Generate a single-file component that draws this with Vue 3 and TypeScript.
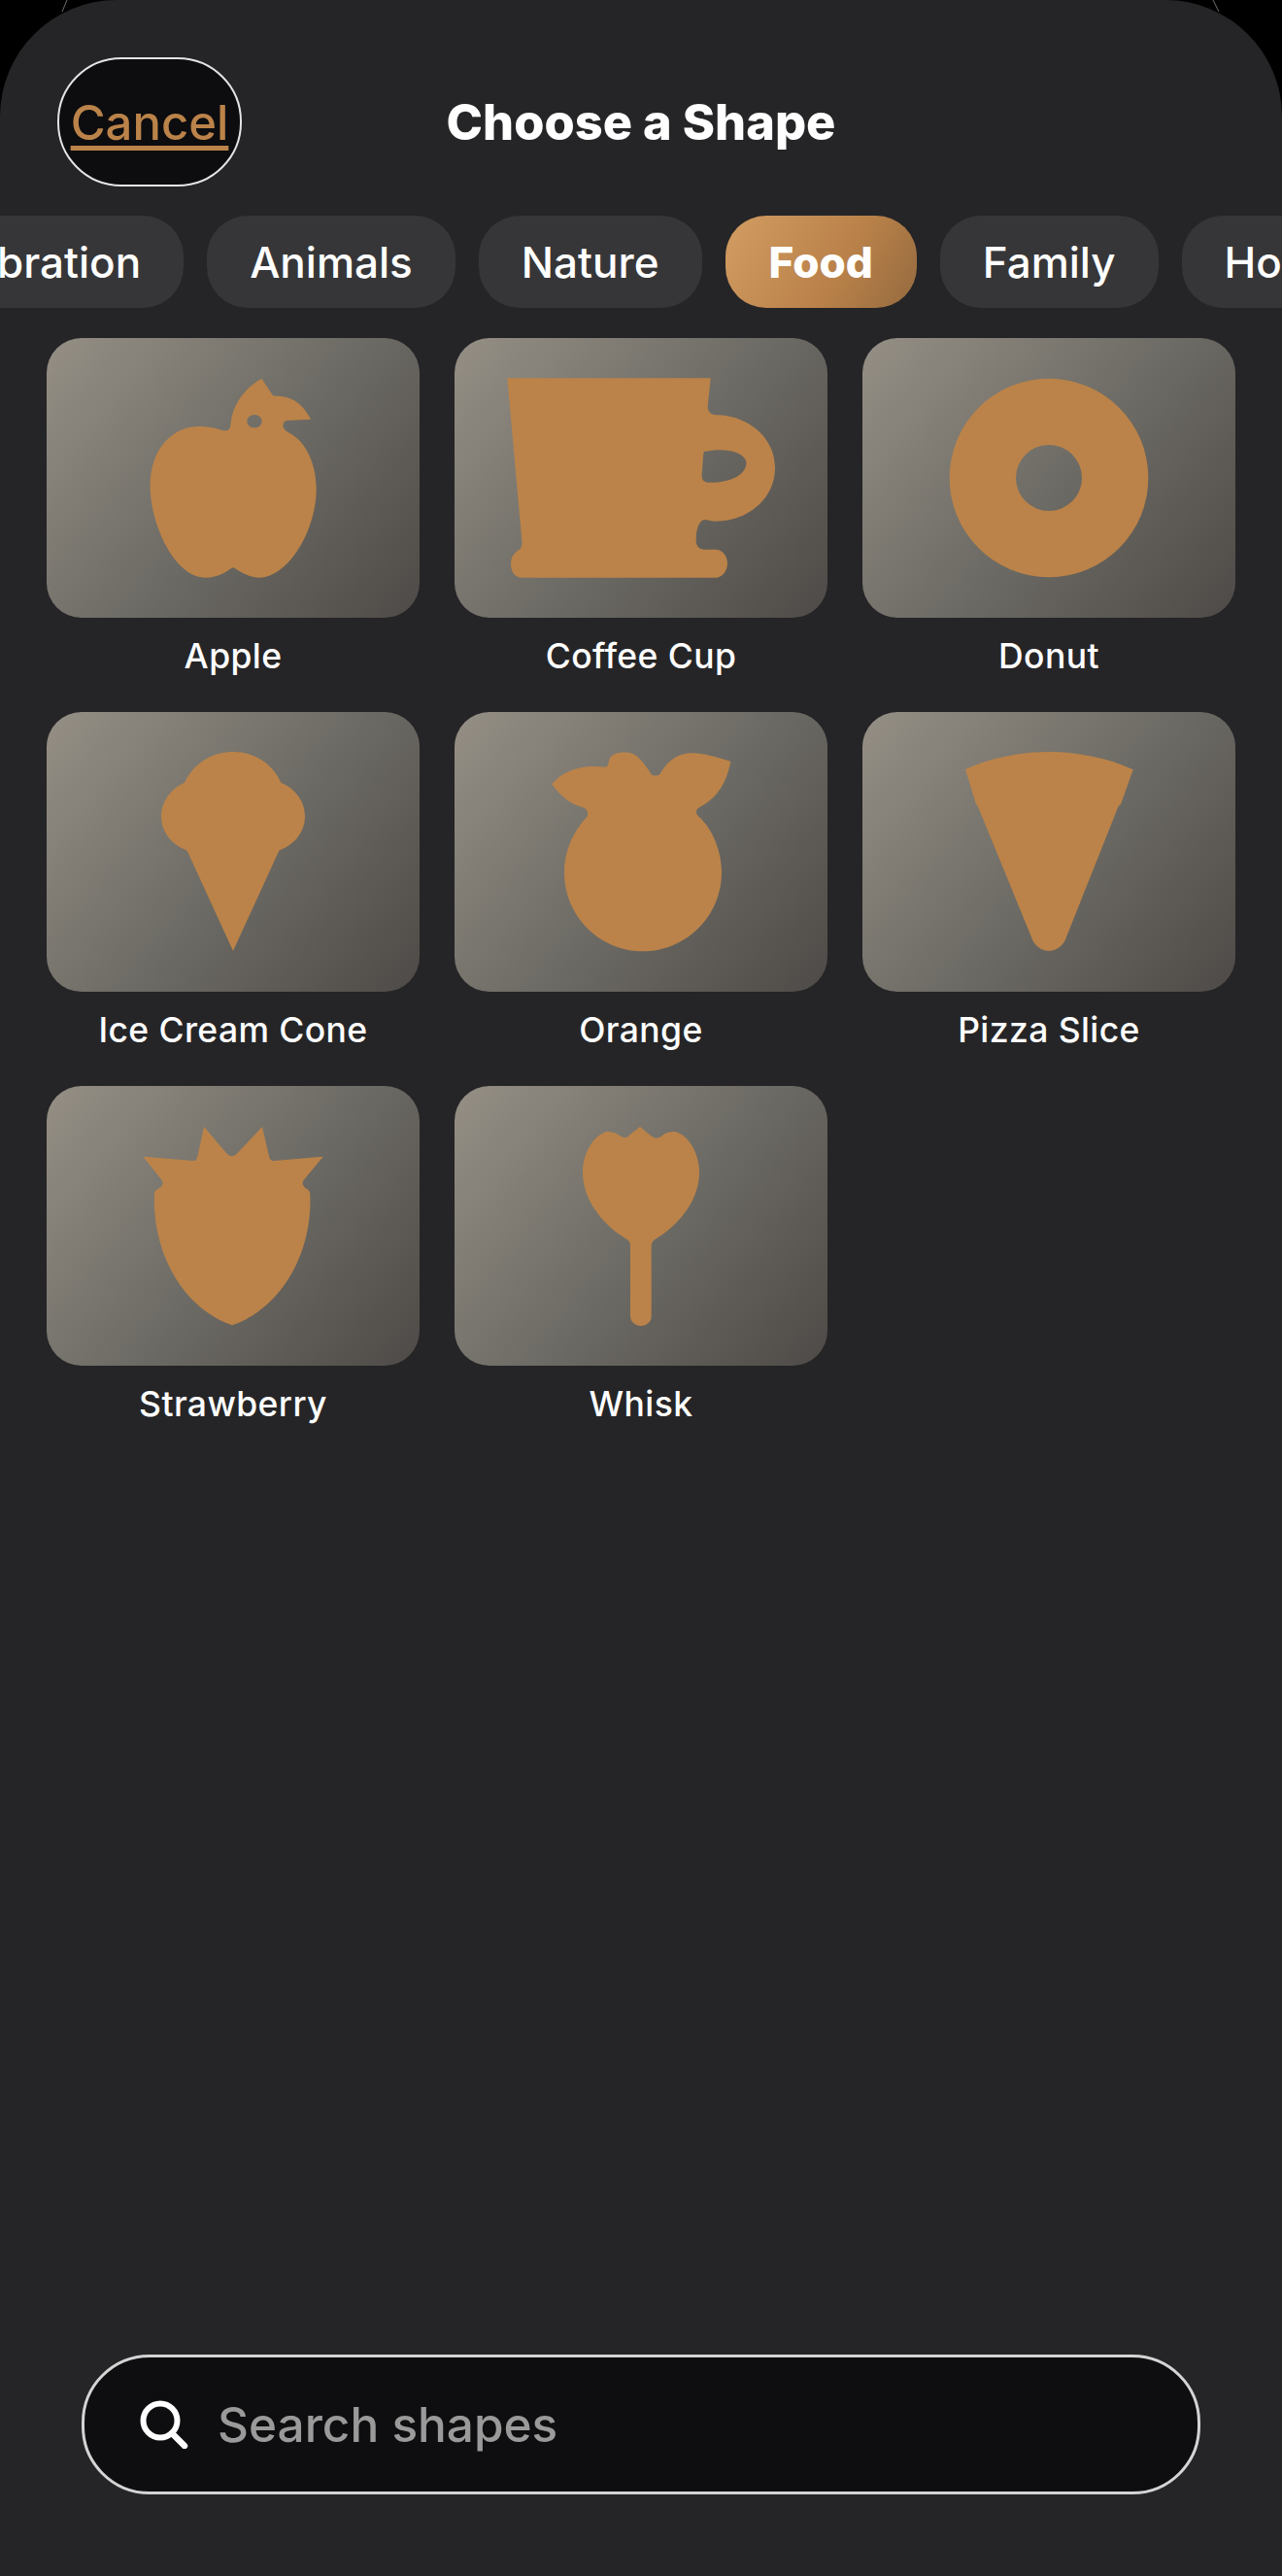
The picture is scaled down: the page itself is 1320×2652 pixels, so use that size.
<script setup lang="ts">
interface Shape {
  name: string
  top: number
  d: string
}

const categories = ['Celebration', 'Animals', 'Nature', 'Food', 'Family', 'Home']
const active = 'Food'

// paths traced in a 1150x864 card box, "top" is the box offset of the trace
const shapes: Shape[] = [
  {
    name: 'Apple',
    top: 24,
    d: 'M718 149L752 200C756 203 762 203 768 203C820 205 850 235 870 275L795 279C780 285 780 305 800 315C860 345 887 420 887 490C887 620 800 764 710 764C680 764 650 745 635 735C632 733 628 733 625 735C610 745 585 764 545 764C450 764 374 600 374 480C374 370 440 297 525 297C560 297 585 305 600 310C615 312 620 305 622 295C625 230 670 175 718 149ZM696 261C683 261 673 270 673 281C673 292 683 301 696 301C709 301 719 292 719 281C719 270 709 261 696 261Z'
  },
  {
    name: 'Coffee Cup',
    top: 24,
    d: 'M217 148L845 148L836 235C836 250 845 262 862 262C960 262 1044 330 1044 425C1044 520 960 590 860 590C845 590 835 585 825 585C810 590 800 610 800 650C800 665 810 677 825 677L860 677C880 677 897 695 897 720C897 745 880 764 860 764L262 764C240 764 228 745 228 720C228 700 240 685 255 677C262 670 263 660 262 650ZM825 375C860 368 900 368 925 378C950 388 962 405 952 425C940 455 890 472 835 470C822 468 817 460 818 445L822 390C823 380 824 377 825 375Z'
  },
  {
    name: 'Donut',
    top: 24,
    d: 'M630 149A307 307 0 1 1 630 763A307 307 0 1 1 630 149ZM630 354A102 102 0 1 0 630 558A102 102 0 1 0 630 354Z'
  },
  {
    name: 'Ice Cream Cone',
    top: 40,
    d: 'M480 258C510 195 570 163 630 163C690 163 750 195 778 258C820 275 852 315 852 362C852 410 820 450 772 468L630 778L488 468C440 450 408 410 408 362C408 315 440 275 480 258Z'
  },
  {
    name: 'Orange',
    top: 40,
    d: 'M355 263C385 225 440 200 520 210C530 210 528 195 535 180C550 160 600 160 615 175C635 190 650 215 662 232C668 238 680 238 688 232C705 205 725 175 770 168C810 163 860 178 907 193C895 250 875 300 810 335C798 342 798 355 810 365C850 400 879 470 879 535C879 670 770 779 636 779C502 779 393 670 393 535C393 470 420 410 462 365C470 355 465 340 450 335C410 322 385 305 355 263Z'
  },
  {
    name: 'Pizza Slice',
    top: 40,
    d: 'M372 218C450 180 550 163 630 163C710 163 810 180 890 218L852 325L845 330L680 745C670 765 650 778 630 778C610 778 590 765 580 745L410 330L405 325Z'
  },
  {
    name: 'Strawberry',
    top: 54,
    d: 'M352 272L505 285C515 285 518 280 520 272L540 180L612 265C620 273 632 273 640 265L720 180L742 275C745 283 750 286 758 285L908 272L848 345C842 353 845 362 852 368C862 373 868 378 868 390C875 570 780 740 627 793C475 740 380 570 387 390C387 378 392 375 402 370C412 363 416 355 410 345Z'
  },
  {
    name: 'Whisk',
    top: 54,
    d: 'M627 180C640 190 655 205 668 213C678 218 688 215 695 208C705 198 720 195 735 195C775 205 810 260 810 320C810 420 730 495 670 530C665 535 662 540 662 550L662 765C662 782 648 795 630 795C612 795 597 782 597 765L597 550C597 540 595 535 590 530C530 495 450 420 450 320C450 260 485 205 525 195C540 195 555 200 565 208C575 215 585 215 590 210C600 200 615 190 627 180Z'
  }
]
</script>

<template>
  <div class="screen">
    <svg class="peek" viewBox="0 0 1320 14" aria-hidden="true">
      <path d="M69 0L64 12M1249 0L1255 12" stroke="#6f6f68" stroke-width="1" fill="none" />
    </svg>
    <div class="sheet">
      <header class="top">
        <button class="cancel">Cancel</button>
        <h1>Choose a Shape</h1>
      </header>

      <div class="chips">
        <div class="chips-track">
          <span v-for="c in categories" :key="c" class="chip" :class="{ on: c === active }">{{ c }}</span>
        </div>
      </div>

      <div class="grid">
        <div v-for="s in shapes" :key="s.name" class="item">
          <div class="thumb">
            <svg :viewBox="`55 ${s.top} 1150 864`">
              <path :d="s.d" fill="#bb8349" fill-rule="evenodd" />
            </svg>
          </div>
          <span class="label">{{ s.name }}</span>
        </div>
      </div>

      <div class="search">
        <svg class="search-icon" viewBox="0 0 50 50">
          <circle cx="21" cy="21" r="17.5" fill="none" stroke="#fff" stroke-width="6" />
          <path d="M33 34L46 47" stroke="#fff" stroke-width="6.5" stroke-linecap="round" />
        </svg>
        <span class="placeholder">Search shapes</span>
      </div>
    </div>
  </div>
</template>

<style>
html,
body {
  background: #000;
}
</style>

<style scoped>
.screen {
  position: relative;
  width: 1320px;
  height: 2652px;
  overflow: hidden;
  background: #000;
  font-family: Inter, "Liberation Sans", sans-serif;
  color: #fff;
}
.peek {
  position: absolute;
  left: 0;
  top: 0;
  width: 1320px;
  height: 14px;
}
.sheet {
  position: relative;
  height: 100%;
  box-sizing: border-box;
  display: flex;
  flex-direction: column;
  padding-top: 59px;
  background: #252527;
  border-radius: 120px 120px 0 0;
}
.top {
  display: grid;
  grid-template-columns: 1fr auto 1fr;
  align-items: center;
  padding: 0 59px;
}
.top h1 {
  grid-column: 2;
  grid-row: 1;
  margin: 0;
  font-size: 50.5px;
  font-weight: 800;
  line-height: 60px;
}
.cancel {
  grid-column: 1;
  grid-row: 1;
  justify-self: start;
  width: 190px;
  height: 133px;
  padding: 2px 0 0;
  box-sizing: border-box;
  background: #0d0d10;
  border: 2px solid #e4e4e4;
  border-radius: 66px;
  color: #bb8349;
  font-family: inherit;
  font-size: 49px;
  font-weight: 500;
  text-decoration: underline;
  text-decoration-thickness: 5px;
  text-underline-offset: 6px;
}
.chips {
  margin-top: 30px;
  overflow: hidden;
}
.chips-track {
  display: flex;
  gap: 24px;
  margin-left: -142px;
  width: max-content;
}
.chip {
  height: 95px;
  padding: 0 44px;
  display: flex;
  align-items: center;
  background: #363638;
  border-radius: 42px;
  font-size: 44px;
  font-weight: 500;
}
.chip.on {
  padding: 0 45px;
  background: linear-gradient(120deg, #d29c62, #b98149 60%, #946a3f);
  font-weight: 800;
}
.grid {
  margin-top: 31px;
  padding: 0 48px;
  display: grid;
  grid-template-columns: repeat(3, 384px);
  gap: 0 36px;
}
.item {
  height: 385px;
  display: flex;
  flex-direction: column;
  align-items: center;
}
.thumb {
  width: 384px;
  height: 288px;
  border-radius: 36px;
  background: linear-gradient(130deg, #958f85, #6d6b65 52%, #4e4a47);
}
.thumb svg {
  display: block;
  width: 100%;
  height: 100%;
}
.label {
  margin-top: 19px;
  font-size: 35.5px;
  font-weight: 500;
  line-height: 42px;
  letter-spacing: 0.4px;
}
.search {
  margin: auto 84px 84px;
  height: 144px;
  box-sizing: border-box;
  display: flex;
  align-items: center;
  gap: 30px;
  padding-left: 57px;
  background: #0e0e10;
  border: 3px solid #d4d4d4;
  border-radius: 70px;
}
.search-icon {
  width: 50px;
  height: 50px;
  flex: none;
}
.placeholder {
  color: #9a9a9a;
  font-size: 49.5px;
  font-weight: 500;
}
</style>
